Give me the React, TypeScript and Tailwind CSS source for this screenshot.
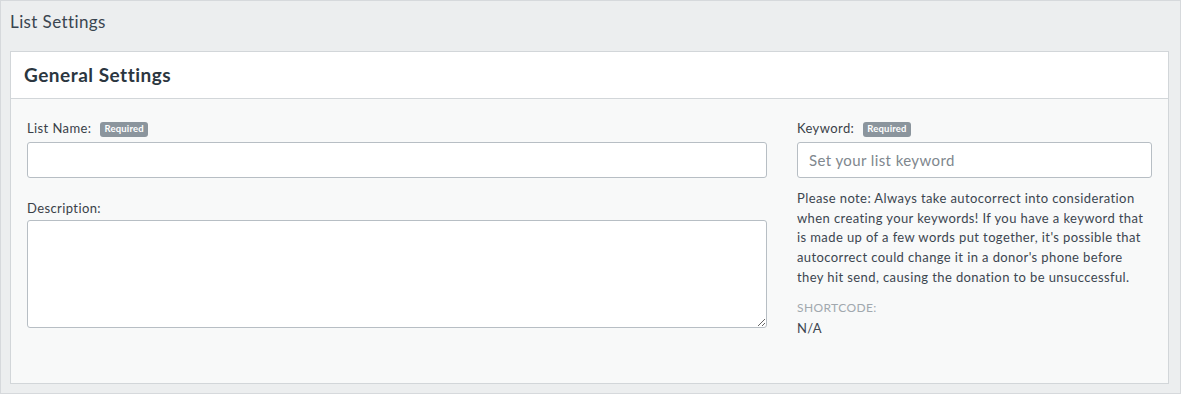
import * as React from "react";

function RequiredBadge() {
  return (
    <span className="ml-[9px] inline-flex h-[15px] items-center rounded-[3px] bg-[#8b959d] px-[4px] text-[9.5px] font-bold leading-none tracking-[0.2px] text-white">
      Required
    </span>
  );
}

export default function App() {
  return (
    <div
      className="h-[394px] w-[1181px] border border-[#d6d9dc] bg-[#eceeef] text-[#3b444c] tracking-[0.4px]"
      style={{ fontFamily: "Lato, 'Open Sans', sans-serif" }}
    >
      {/* Page title */}
      <div className="h-[50px] px-[9px] pt-[11px] text-[17px] leading-[20px] text-[#3a4550]">
        List Settings
      </div>

      {/* Card */}
      <div className="ml-[9px] h-[333px] w-[1159px] border border-[#d2d6d9] bg-[#f8f9f9]">
        <div className="flex h-[47px] items-center border-b border-[#d2d6d9] bg-white px-[13px]">
          <h2 className="text-[19px] font-bold tracking-[0.5px] text-[#2b3640]">General Settings</h2>
        </div>

        <div className="flex gap-[30px] px-[16px] pt-[22px]">
          {/* Left column */}
          <div className="flex w-[740px] flex-col">
            <label className="flex h-[16px] items-center text-[13px] text-[#3a4148]">
              List Name:
              <RequiredBadge />
            </label>
            <input
              type="text"
              className="mt-[5px] h-[36px] w-full rounded-[3px] border border-[#b7bec4] bg-white px-[10px] text-[15px] outline-none"
            />
            <label className="mt-[21px] h-[16px] text-[13px] text-[#3a4148]">Description:</label>
            <textarea className="mt-[5px] h-[108px] w-full rounded-[3px] border border-[#b7bec4] bg-white px-[10px] py-[6px] text-[15px] outline-none" />
          </div>

          {/* Right column */}
          <div className="flex w-[355px] flex-col">
            <label className="flex h-[16px] items-center text-[13px] text-[#3a4148]">
              Keyword:
              <RequiredBadge />
            </label>
            <input
              type="text"
              placeholder="Set your list keyword"
              className="mt-[5px] h-[36px] w-full rounded-[3px] border border-[#b7bec4] bg-white px-[11px] text-[15px] outline-none placeholder:text-[#80878e]"
            />
            <p className="mt-[11px] text-[13px] leading-[19.7px] text-[#3c4650]">
              Please note: Always take autocorrect into consideration when creating your keywords! If
              you have a keyword that is made up of a few words put together, it's possible that
              autocorrect could change it in a donor's phone before they hit send, causing the
              donation to be unsuccessful.
            </p>
            <div className="mt-[12px] text-[12px] leading-[16px] text-[#a1a8ae]">SHORTCODE:</div>
            <div className="mt-[4px] text-[13px] leading-[16px] text-[#3c4650]">N/A</div>
          </div>
        </div>
      </div>
    </div>
  );
}
